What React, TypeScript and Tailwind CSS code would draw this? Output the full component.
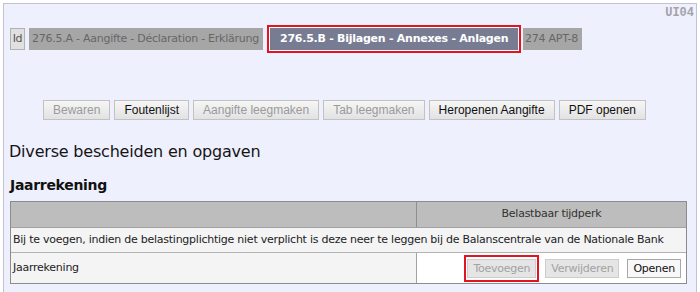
import React from 'react';

const vera = "font-['DejaVu_Sans',Verdana,sans-serif]";
const arial = "font-['Liberation_Sans',Arial,sans-serif]";

const toolbar = [
  { label: 'Bewaren', enabled: false },
  { label: 'Foutenlijst', enabled: true },
  { label: 'Aangifte leegmaken', enabled: false },
  { label: 'Tab leegmaken', enabled: false },
  { label: 'Heropenen Aangifte', enabled: true },
  { label: 'PDF openen', enabled: true },
];

function ToolbarButton({ label, enabled }: { label: string; enabled: boolean }) {
  return (
    <button
      className={`${arial} h-[20px] px-[9px] text-[12px] leading-[18px] border border-[#c2c2c2] bg-linear-to-b from-[#f6f6f6] to-[#e2e2e2] whitespace-nowrap ${
        enabled ? 'text-[#111]' : 'text-[#9a9a9a]'
      }`}
    >
      {label}
    </button>
  );
}

function RowButton({ label, enabled }: { label: string; enabled: boolean }) {
  return (
    <button
      className={`${vera} h-[19px] px-[5px] text-[11px] tracking-[-0.25px] leading-[17px] border whitespace-nowrap ${
        enabled
          ? 'border-[#a8a8a8] bg-[#f8f8f8] text-[#111]'
          : 'border-[#cdcdcd] bg-[#e5e5e5] text-[#a2a2a2]'
      }`}
    >
      {label}
    </button>
  );
}

export default function App() {
  return (
    <div className="w-[700px] h-[292px] overflow-hidden bg-white pt-[3px] pl-[3px]">
      <div className="w-[694px] h-[300px] border border-[#c2c3cf] bg-[#eff0fd] flex flex-col">
        {/* form code */}
        <div className="h-[21px] flex justify-end pr-[2px] pt-[2px]">
          <span className="font-['Liberation_Mono',monospace] font-bold text-[12px] leading-[14px] text-[#a3a3a8]">
            UI04
          </span>
        </div>

        {/* tabs */}
        <div className={`${vera} h-[28px] flex items-center pl-[6px] text-[11px] tracking-[-0.25px]`}>
          <div className="w-[15px] h-[22px] flex items-center justify-center border border-[#b2b2b2] bg-[#e0e0e0] text-[#555]">
            Id
          </div>
          <div className="ml-[4px] w-[234px] h-[22px] flex items-center pl-[3px] bg-[#a6a6a6] text-[#666] whitespace-nowrap">
            276.5.A - Aangifte - Déclaration - Erklärung
          </div>
          <div className="ml-[4px] border-2 border-[#e0151f] p-px bg-white">
            <div className="w-[248px] h-[22px] flex items-center pl-[10px] bg-[#787c92] text-white font-bold whitespace-nowrap">
              276.5.B - Bijlagen - Annexes - Anlagen
            </div>
          </div>
          <div className="ml-[2px] w-[59px] h-[22px] flex items-center pl-[2px] bg-[#a6a6a6] text-[#666] whitespace-nowrap">
            274 APT-8
          </div>
        </div>

        {/* toolbar */}
        <div className="mt-[47px] pl-[39px] flex gap-[4px]">
          {toolbar.map((b) => (
            <ToolbarButton key={b.label} label={b.label} enabled={b.enabled} />
          ))}
        </div>

        <h1 className={`${vera} mt-[22px] pl-[5px] text-[16px] leading-[20px] tracking-[-0.2px] text-[#151515]`}>
          Diverse bescheiden en opgaven
        </h1>

        <h2 className={`${vera} mt-[15px] pl-[6px] text-[14px] leading-[17px] tracking-[-0.3px] font-bold text-[#111]`}>
          Jaarrekening
        </h2>

        {/* table */}
        <div className={`${vera} mt-[7px] ml-[6px] w-[677px] border border-[#8c8c8c] text-[11px] tracking-[-0.25px] text-[#222]`}>
          <div className="flex h-[26px] bg-[#bdbdbd] border-b border-[#a2a2a2]">
            <div className="w-[406px] border-r border-[#8f8f8f]" />
            <div className="flex-1 flex items-center justify-center text-[#333]">Belastbaar tijdperk</div>
          </div>
          <div className="h-[25px] flex items-center pl-[2px] bg-[#f4f4f4] border-b border-[#b3b3b3] whitespace-nowrap">
            Bij te voegen, indien de belastingplichtige niet verplicht is deze neer te leggen bij de Balanscentrale van de Nationale Bank
          </div>
          <div className="flex h-[30px]">
            <div className="w-[406px] flex items-center pl-[2px] bg-[#f4f4f4] border-r border-[#a2a2a2]">
              Jaarrekening
            </div>
            <div className="flex-1 flex items-center justify-end pr-[5px] bg-white">
              <div className="border-2 border-[#e0151f] px-px py-[2px]">
                <RowButton label="Toevoegen" enabled={false} />
              </div>
              <div className="ml-[6px]">
                <RowButton label="Verwijderen" enabled={false} />
              </div>
              <div className="ml-[8px]">
                <RowButton label="Openen" enabled={true} />
              </div>
            </div>
          </div>
        </div>
      </div>
    </div>
  );
}
